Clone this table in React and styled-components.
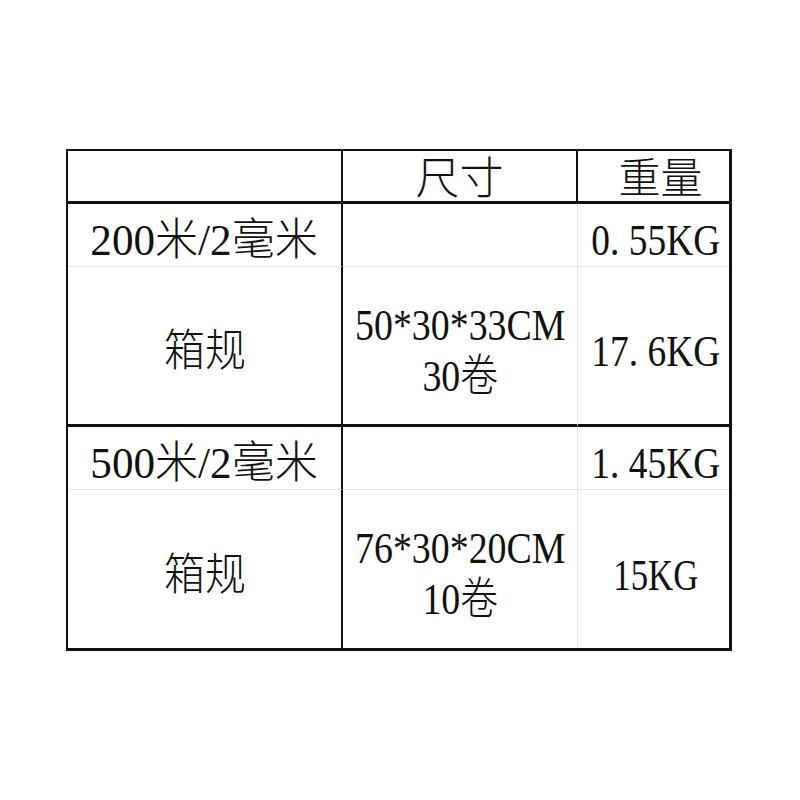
import React from "react";
import styled, { createGlobalStyle } from "styled-components";

const Global = createGlobalStyle`
  html, body { margin: 0; padding: 0; background: #ffffff; }
  body {
    font-family: "Liberation Serif", "Times New Roman", "Noto Sans CJK SC", serif;
    color: #111111;
  }
`;

const Page = styled.div`
  width: 800px;
  height: 800px;
  padding: 149px 0 0 66px;
  box-sizing: border-box;
`;

const Table = styled.div`
  display: grid;
  grid-template-columns: 275px 235px 151px;
  grid-template-rows: 53px 63px 160px 63px 158px;
  width: max-content;
  border-left: 2px solid #111;
  border-top: 2px solid #111;
  border-right: 3px solid #111;
  border-bottom: 3px solid #111;
`;

const lineStyle = {
  thick: "3px solid #111",
  mid: "2px solid #111",
  light: "1px solid #e6e6e6",
  none: "none",
};

const Cell = styled.div`
  box-sizing: border-box;
  display: flex;
  align-items: center;
  justify-content: center;
  text-align: center;
  border-right: ${(p) => lineStyle[p.$right || "none"]};
  border-bottom: ${(p) => lineStyle[p.$bottom || "none"]};
  padding-top: ${(p) => p.$pt || 0}px;
  padding-left: ${(p) => p.$pl || 0}px;
  font-family: "Liberation Serif", "Times New Roman", "Noto Sans CJK SC", serif;
  font-size: ${(p) => p.$size || 44}px;
  font-weight: 300;
  line-height: 51px;
  white-space: nowrap;
`;

const Text = styled.span`
  display: inline-flex;
  flex-direction: column;
  align-items: center;
  transform: scaleX(${(p) => p.$sx || 1});
`;

const Line = styled.span`
  display: block;
`;

const rows = [
  { name: "200米/2毫米", weight: "0. 55KG", boxSize: ["50*30*33CM", "30卷"], boxWeight: "17. 6KG", boxWeightSx: 0.85 },
  { name: "500米/2毫米", weight: "1. 45KG", boxSize: ["76*30*20CM", "10卷"], boxWeight: "15KG", boxWeightSx: 0.79 },
];

export default function App() {
  return (
    <>
      <Global />
      <Page>
        <Table>
          <Cell $right="mid" $bottom="thick" />
          <Cell $right="mid" $bottom="thick" $size={44} $pt={6}>
            <Text>尺寸</Text>
          </Cell>
          <Cell $bottom="thick" $size={42} $pt={6} $pl={14}>
            <Text>重量</Text>
          </Cell>
          {rows.map((r, i) => (
            <React.Fragment key={i}>
              <Cell $right="mid" $bottom="light" $pt={10}>
                <Text $sx={0.98}>{r.name}</Text>
              </Cell>
              <Cell $right="light" $bottom="light" />
              <Cell $bottom="light" $pt={10} $pl={4}>
                <Text $sx={0.85}>{r.weight}</Text>
              </Cell>
              <Cell $right="mid" $bottom={i === 0 ? "thick" : "none"} $pt={12}>
                <Text $sx={0.93}>箱规</Text>
              </Cell>
              <Cell $right="light" $bottom={i === 0 ? "thick" : "none"} $pt={10}>
                <Text $sx={0.86}>
                  {r.boxSize.map((l) => (
                    <Line key={l}>{l}</Line>
                  ))}
                </Text>
              </Cell>
              <Cell $bottom={i === 0 ? "thick" : "none"} $pt={12} $pl={4}>
                <Text $sx={r.boxWeightSx}>{r.boxWeight}</Text>
              </Cell>
            </React.Fragment>
          ))}
        </Table>
      </Page>
    </>
  );
}
